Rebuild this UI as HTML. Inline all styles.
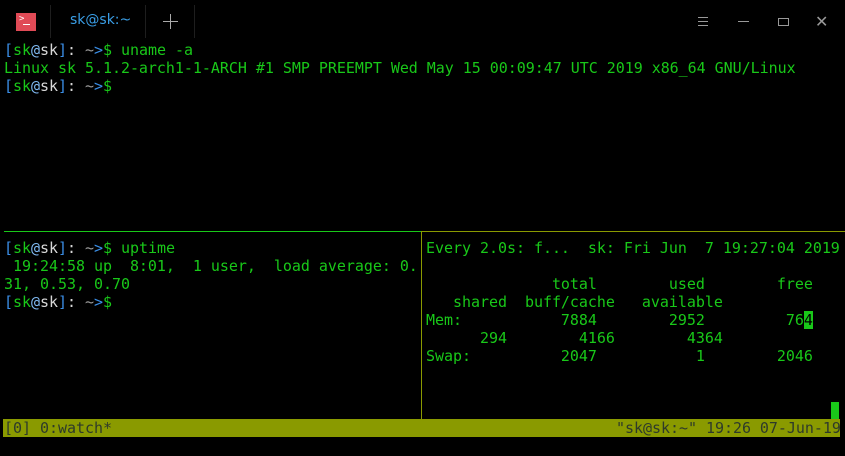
<!DOCTYPE html>
<html><head><style>
body{margin:0;width:845px;height:456px;background:#000;overflow:hidden;position:relative;font-family:"DejaVu Sans Mono","Liberation Mono",monospace;font-size:15px;}
.t{position:absolute;white-space:pre;line-height:18px;color:#19c819;letter-spacing:-0.035px}
.b{color:#3a8ee6}.l{color:#7fb8f0}.w{color:#d8d8d8}.g{color:#19c819}.gr{color:#9a9a9a}
</style></head><body>
<div style="position:absolute;left:16px;top:13px;width:20px;height:18px;background:#e04a56"></div>
<div style="position:absolute;left:19px;top:14px;color:#fff;font-size:9px;font-family:'DejaVu Sans Mono';">&gt;</div>
<div style="position:absolute;left:23px;top:24px;width:7px;height:1px;background:#fff"></div>
<div style="position:absolute;left:50px;top:5px;width:1px;height:33px;background:#1e1e1e"></div>
<div style="position:absolute;left:145px;top:5px;width:1px;height:33px;background:#1e1e1e"></div>
<div style="position:absolute;left:194px;top:5px;width:1px;height:33px;background:#1e1e1e"></div>
<div style="position:absolute;left:70px;top:12px;color:#3a9ee6;font-family:'DejaVu Sans','Liberation Sans',sans-serif;font-size:14px">sk@sk:~</div>
<div style="position:absolute;left:163px;top:21px;width:15px;height:1px;background:#aaa"></div>
<div style="position:absolute;left:170px;top:14px;width:1px;height:15px;background:#aaa"></div>
<div style="position:absolute;left:698px;top:17px;width:10px;height:1px;background:#999;box-shadow:0 4px 0 #999,0 8px 0 #999"></div>
<div style="position:absolute;left:738px;top:21px;width:11px;height:1px;background:#999"></div>
<div style="position:absolute;left:778px;top:18px;width:9px;height:6px;border:1px solid #999"></div>
<div style="position:absolute;left:815px;top:14px;color:#999;font-size:16px;font-family:'DejaVu Sans';line-height:16px">✕</div>

<div class="t" style="left:4px;top:41px"><span class="b">[</span><span class="g">sk</span><span class="l">@</span><span class="w">sk</span><span class="b">]</span><span class="w">: </span><span class="gr">~</span><span class="b">&gt;</span><span class="g">$ uname -a</span>
Linux sk 5.1.2-arch1-1-ARCH #1 SMP PREEMPT Wed May 15 00:09:47 UTC 2019 x86_64 GNU/Linux
<span class="b">[</span><span class="g">sk</span><span class="l">@</span><span class="w">sk</span><span class="b">]</span><span class="w">: </span><span class="gr">~</span><span class="b">&gt;</span><span class="g">$</span></div>

<div style="position:absolute;left:4px;top:231px;width:417px;height:1px;background:#19c819"></div>
<div style="position:absolute;left:422px;top:231px;width:423px;height:1px;background:#8a9a00"></div>
<div style="position:absolute;left:421px;top:231px;width:1px;height:188px;background:#8a9a00"></div>

<div class="t" style="left:4px;top:239px"><span class="b">[</span><span class="g">sk</span><span class="l">@</span><span class="w">sk</span><span class="b">]</span><span class="w">: </span><span class="gr">~</span><span class="b">&gt;</span><span class="g">$ uptime</span>
 19:24:58 up  8:01,  1 user,  load average: 0.
31, 0.53, 0.70
<span class="b">[</span><span class="g">sk</span><span class="l">@</span><span class="w">sk</span><span class="b">]</span><span class="w">: </span><span class="gr">~</span><span class="b">&gt;</span><span class="g">$</span></div>

<div class="t" style="left:426px;top:239px">Every 2.0s: f...  sk: Fri Jun  7 19:27:04 2019

              total        used        free
   shared  buff/cache   available
Mem:           7884        2952         76<span style="background:#19c819;color:#000">4</span>
      294        4166        4364
Swap:          2047           1        2046</div>
<div style="position:absolute;left:831px;top:402px;width:8px;height:17px;background:#19c819"></div>

<div style="position:absolute;left:3px;top:419px;width:837px;height:18px;background:#8a9a00"></div>
<div class="t" style="left:4px;top:419px;color:#2e3a2a">[0] 0:watch*</div>
<div class="t" style="left:616px;top:419px;color:#2e3a2a">"sk@sk:~" 19:26 07-Jun-19</div>
</body></html>
